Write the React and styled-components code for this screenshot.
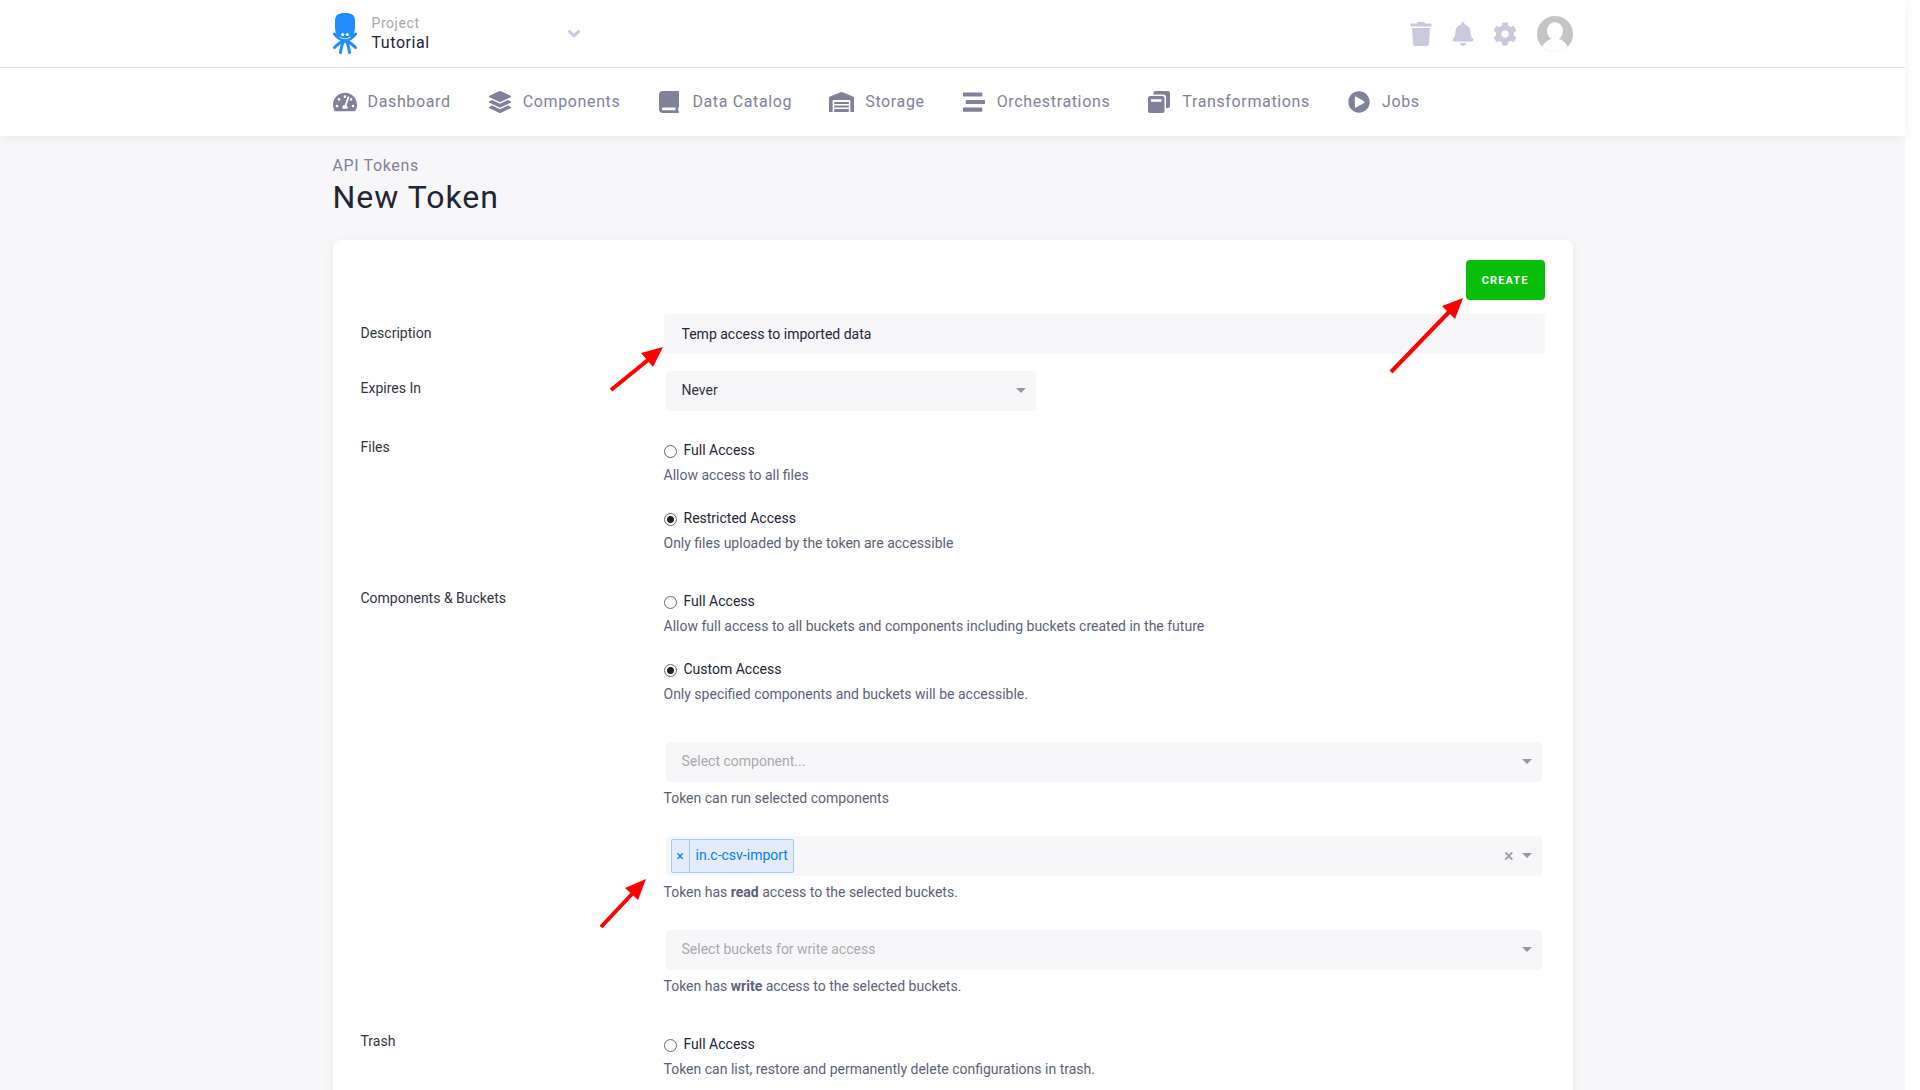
import React from "react";
import styled, { createGlobalStyle, css } from "styled-components";
import {
  FaTachometerAlt,
  FaLayerGroup,
  FaStream,
  FaPlayCircle,
  FaTrash,
  FaBell,
  FaCog,
} from "react-icons/fa";

const color = {
  page: "#f7f7fa",
  text: "#222537",
  label: "#33343f",
  help: "#5c5f7b",
  nav: "#80829b",
  icon: "#c9cadd",
  line: "#e3e4f0",
  muted: "#aaaaaa",
  arrow: "#999999",
  green: "#09be09",
  blue: "#218dff",
  tag: "#007eff",
};

const GlobalStyle = createGlobalStyle`
  *, *::before, *::after { box-sizing: border-box; }
  html { background: #fff; overflow: hidden; }
  body {
    margin: 0;
    font-family: Roboto, "Liberation Sans", sans-serif;
    font-size: 14px;
    line-height: 20px;
    color: ${color.text};
  }
  input, select, button { font: inherit; color: inherit; }
`;

const Shell = styled.div`
  position: relative;
  display: flex;
  flex-direction: column;
  min-height: 100vh;
  margin-right: 15px;
  background: ${color.page};
`;

const Container = styled.div`
  width: 100%;
  max-width: 1240px;
  margin: 0 auto;
`;

const Header = styled.header`
  background: #fff;
  box-shadow: 0 2px 12px rgba(0, 0, 0, 0.06);
`;

const TopBar = styled.div`
  border-bottom: 1px solid ${color.line};
`;

const TopBarInner = styled(Container)`
  display: flex;
  align-items: center;
  justify-content: space-between;
  height: 67px;
`;

const ProjectButton = styled.button`
  display: flex;
  align-items: center;
  width: 247px;
  padding: 0;
  border: 0;
  background: none;
  text-align: left;
`;

const ProjectText = styled.span`
  display: flex;
  flex: 1;
  flex-direction: column;
  margin-left: 15px;
  padding-bottom: 2px;
  letter-spacing: 0.04em;
`;

const ProjectCaption = styled.span`
  font-size: 14px;
  line-height: 19px;
  color: ${color.muted};
`;

const ProjectName = styled.span`
  font-size: 16px;
  line-height: 19px;
`;

const Actions = styled.div`
  display: flex;
  align-items: center;
  gap: 18px;
  color: ${color.icon};
`;

const IconButton = styled.button`
  display: flex;
  padding: 0;
  border: 0;
  background: none;
  color: inherit;
`;

const AvatarButton = styled(IconButton)`
  margin-left: 2px;
`;

const Nav = styled(Container).attrs({ as: "nav" })`
  display: flex;
  align-items: center;
  gap: 37px;
  height: 68px;
`;

const NavLink = styled.a`
  display: flex;
  align-items: center;
  gap: 11px;
  color: ${color.nav};
  font-size: 16px;
  letter-spacing: 0.04em;
  text-decoration: none;
`;

const NavIcon = styled.span`
  display: flex;
  justify-content: center;
  min-width: 24px;
`;

const PageHead = styled(Container)`
  padding: 20px 0 22px;
`;

const Crumb = styled.a`
  display: block;
  font-size: 16px;
  line-height: 20px;
  letter-spacing: 0.04em;
  color: ${color.nav};
  text-decoration: none;
`;

const Title = styled.h1`
  margin: 0;
  font-size: 32px;
  font-weight: 400;
  line-height: 42px;
  letter-spacing: 1px;
`;

const Card = styled(Container).attrs({ as: "form" })`
  flex: 1;
  padding: 20px 28px 0;
  border-radius: 8px 8px 0 0;
  background: #fff;
  box-shadow: 0 2px 12px rgba(0, 0, 0, 0.05);
`;

const CardActions = styled.div`
  display: flex;
  justify-content: flex-end;
  margin-bottom: 14px;
`;

const CreateButton = styled.button.attrs({ type: "button" })`
  height: 40px;
  padding: 1px 16px 0;
  border: 0;
  border-radius: 4px;
  background: ${color.green};
  color: #fff;
  font-size: 11px;
  font-weight: 700;
  letter-spacing: 0.1em;
  text-transform: uppercase;
`;

const Row = styled.div`
  display: grid;
  grid-template-columns: 303px 1fr;
  margin-bottom: ${(p) => p.$gap}px;
`;

const labelText = css`
  padding-top: 9px;
  color: ${color.label};
`;

const RowLabel = styled.label`
  ${labelText}
`;

const RowHeading = styled.span`
  ${labelText}
`;

const TextInput = styled.input`
  width: 100%;
  height: 40px;
  padding: 0 18px;
  border: 0;
  border-radius: 4px;
  background: ${color.page};
`;

const Choices = styled.div`
  padding: 12px 0 ${(p) => p.$after || 0}px;
`;

const Choice = styled.div`
  margin-bottom: 23px;
`;

const ChoiceLabel = styled.label`
  display: flex;
  align-items: center;
  gap: 7px;
  height: 20px;
`;

const Radio = styled.input.attrs({ type: "radio" })`
  appearance: none;
  width: 13px;
  height: 13px;
  margin: 3px 0 0;
  border: 1px solid #666;
  border-radius: 50%;
  background: #fff;

  &:checked {
    background: radial-gradient(circle, #222 0 3px, #fff 4px);
  }
`;

const Help = styled.p`
  margin: ${(p) => p.$top}px 0 0;
  color: ${color.help};

  strong { font-weight: 700; }
`;

const Picker = styled.div`
  display: flex;
  align-items: center;
  width: ${(p) => p.$width || "auto"};
  height: 40px;
  margin: 2px 3px 0 2px;
  padding-right: 10px;
  border-radius: 4px;
  background: ${color.page};
`;

const PickerSelect = styled.select`
  appearance: none;
  flex: 1;
  min-width: 0;
  height: 40px;
  padding: 0 16px 2px;
  border: 0;
  background: none;
  color: ${(p) => (p.$empty ? color.muted : color.label)};
`;

const PickerInput = styled.input`
  flex: 1;
  min-width: 0;
  border: 0;
  background: none;
`;

const PickerList = styled.div`
  display: grid;
  gap: 26px;
`;

const PickerGroup = styled.div`
  display: flow-root;
`;

const Arrow = styled.span`
  border: 5px solid transparent;
  border-top-color: ${color.arrow};
  border-bottom-width: 2px;
`;

const ClearButton = styled.button.attrs({ type: "button" })`
  margin-right: 8px;
  padding: 0;
  border: 0;
  background: none;
  color: ${color.arrow};
  font-size: 18px;
`;

const Tag = styled.span`
  display: flex;
  height: 34px;
  margin-left: 5px;
  border: 1px solid rgba(0, 126, 255, 0.3);
  border-radius: 2px;
  background: rgba(0, 126, 255, 0.08);
  color: ${color.tag};
  line-height: 30px;
`;

const TagRemove = styled.button.attrs({ type: "button" })`
  width: 18px;
  padding: 0;
  border: 0;
  border-right: 1px solid rgba(0, 126, 255, 0.3);
  background: none;
`;

const TagText = styled.span`
  padding: 0 5px 0 6px;
`;

const Pointers = styled.svg`
  position: absolute;
  top: 0;
  left: 50%;
  margin-left: -620px;
  pointer-events: none;
`;

const Logo = () => (
  <svg width="24" height="41" viewBox="0 0 24 41" aria-hidden="true">
    <path
      d="M2 8C2 2 5 0 12 0s10 2 10 8v6c0 5-2 10-5 12H7C4 24 2 19 2 14z"
      fill={color.blue}
    />
    <g fill="none" stroke={color.blue} strokeWidth="3" strokeLinecap="round">
      <path d="M1.500 21C4 24 7 27.500 12 27.500s8-3.500 10.500-6.500" />
      <path d="M1.500 34.500C5 31 7 29 11 28M22.500 34.500C19 31 17 29 13 28" />
      <path d="M7.500 39.500C8 35 9 31 11 28M16.500 39.500C16 35 15 31 13 28" />
    </g>
    <path d="M6.500 24q5.500 3.500 11 0" fill="none" stroke="#fff" strokeWidth="0.800" />
    <circle cx="9.700" cy="21.500" r="1.600" fill="#fff" />
    <circle cx="14.300" cy="21.500" r="1.600" fill="#fff" />
  </svg>
);

const Chevron = () => (
  <svg width="12" height="8" viewBox="0 0 12 8" aria-hidden="true">
    <path d="M1.500 1.500L6 5.800l4.500-4.300" fill="none" stroke={color.icon} strokeWidth="3" strokeLinecap="round" strokeLinejoin="round" />
  </svg>
);

const BookIcon = () => (
  <svg width="20" height="22" viewBox="0 0 20 22" fill="currentColor" aria-hidden="true">
    <path
      fillRule="evenodd"
      d="M4 0h15q1 0 1 1v14.500q0 .800-.600 1.200-.500 1.600 0 3.200.600.400.600 1v.100q0 1-1 1H4q-4 0-4-4V4q0-4 4-4zM4.200 16.500q-1.300.200-1.300 1.400t1.300 1.400H16.500v-2.800z"
    />
  </svg>
);

const WarehouseIcon = () => (
  <svg width="25" height="20" viewBox="0 0 24 20" preserveAspectRatio="none" fill="currentColor" aria-hidden="true">
    <path d="M0 20V6q0-1 1-1.400L11 .300q1-.500 2 0l10 4.300q1 .400 1 1.400v14h-3.500V9q0-1-1-1h-15q-1 0-1 1v11z" />
    <path d="M5 10h14v2H5zM5 13.500h14v2H5zM5 17h14v3H5z" />
  </svg>
);

const CopiesIcon = () => (
  <svg width="22" height="22" viewBox="0 0 22 22" fill="currentColor" aria-hidden="true">
    <path d="M5.500 3.500V2q0-2 2-2H20q2 0 2 2v13q0 2-2 2h-2V6q0-2.500-2.500-2.500z" />
    <path fillRule="evenodd" d="M2 5h12.500q2 0 2 2V20q0 2-2 2H2q-2 0-2-2V7q0-2 2-2zM3 8.200v2.600h10.500V8.200z" />
  </svg>
);

const Avatar = () => (
  <svg width="36" height="36" viewBox="0 0 36 36" aria-hidden="true">
    <defs>
      <clipPath id="avatar"><circle cx="18" cy="18" r="18" /></clipPath>
    </defs>
    <g clipPath="url(#avatar)">
      <rect width="36" height="36" fill="#c5c5c5" />
      <ellipse cx="18" cy="15" rx="8" ry="9" fill="#fff" />
      <path d="M4 36c1-7 4-11 10-13h8c6 2 9 6 10 13z" fill="#fff" />
    </g>
  </svg>
);

const navItems = [
  { name: "Dashboard", icon: <FaTachometerAlt size={24} /> },
  { name: "Components", icon: <FaLayerGroup size={22} /> },
  { name: "Data Catalog", icon: <BookIcon /> },
  { name: "Storage", icon: <WarehouseIcon /> },
  { name: "Orchestrations", icon: <FaStream size={22} /> },
  { name: "Transformations", icon: <CopiesIcon /> },
  { name: "Jobs", icon: <FaPlayCircle size={22} /> },
];

function AccessChoice({ name, label, help, checked }) {
  return (
    <Choice>
      <ChoiceLabel>
        <Radio name={name} defaultChecked={checked} />
        {label}
      </ChoiceLabel>
      <Help $top={5}>{help}</Help>
    </Choice>
  );
}

export default function App() {
  return (
    <>
      <GlobalStyle />
      <Shell>
        <Header>
          <TopBar>
            <TopBarInner>
              <ProjectButton type="button">
                <Logo />
                <ProjectText>
                  <ProjectCaption>Project</ProjectCaption>
                  <ProjectName>Tutorial</ProjectName>
                </ProjectText>
                <Chevron />
              </ProjectButton>
              <Actions>
                <IconButton type="button" aria-label="Trash"><FaTrash size={24} /></IconButton>
                <IconButton type="button" aria-label="Notifications"><FaBell size={24} /></IconButton>
                <IconButton type="button" aria-label="Settings"><FaCog size={24} /></IconButton>
                <AvatarButton type="button" aria-label="Account"><Avatar /></AvatarButton>
              </Actions>
            </TopBarInner>
          </TopBar>
          <Nav>
            {navItems.map((item) => (
              <NavLink key={item.name} href="#">
                <NavIcon>{item.icon}</NavIcon>
                {item.name}
              </NavLink>
            ))}
          </Nav>
        </Header>

        <PageHead>
          <Crumb href="#">API Tokens</Crumb>
          <Title>New Token</Title>
        </PageHead>

        <Card>
          <CardActions>
            <CreateButton>Create</CreateButton>
          </CardActions>

          <Row $gap={15}>
            <RowLabel htmlFor="description">Description</RowLabel>
            <TextInput id="description" defaultValue="Temp access to imported data" />
          </Row>

          <Row $gap={17}>
            <RowLabel htmlFor="expires">Expires In</RowLabel>
            <Picker $width="370px">
              <PickerSelect id="expires"><option>Never</option></PickerSelect>
              <Arrow />
            </Picker>
          </Row>

          <Row $gap={3}>
            <RowHeading>Files</RowHeading>
            <Choices role="radiogroup" aria-label="Files">
              <AccessChoice name="files" label="Full Access" help="Allow access to all files" />
              <AccessChoice name="files" label="Restricted Access" help="Only files uploaded by the token are accessible" checked />
            </Choices>
          </Row>

          <Row $gap={26}>
            <RowHeading>Components &amp; Buckets</RowHeading>
            <div>
              <Choices $after={13} role="radiogroup" aria-label="Components and buckets">
                <AccessChoice name="buckets" label="Full Access" help="Allow full access to all buckets and components including buckets created in the future" />
                <AccessChoice name="buckets" label="Custom Access" help="Only specified components and buckets will be accessible." checked />
              </Choices>
              <PickerList>
                <PickerGroup>
                  <Picker>
                    <PickerSelect $empty aria-label="Components"><option>Select component...</option></PickerSelect>
                    <Arrow />
                  </Picker>
                  <Help $top={6}>Token can run selected components</Help>
                </PickerGroup>
                <PickerGroup>
                  <Picker>
                    <Tag>
                      <TagRemove aria-label="Remove in.c-csv-import">×</TagRemove>
                      <TagText>in.c-csv-import</TagText>
                    </Tag>
                    <PickerInput aria-label="Buckets for read access" />
                    <ClearButton aria-label="Clear all">×</ClearButton>
                    <Arrow />
                  </Picker>
                  <Help $top={6}>Token has <strong>read</strong> access to the selected buckets.</Help>
                </PickerGroup>
                <PickerGroup>
                  <Picker>
                    <PickerSelect $empty aria-label="Buckets for write access"><option>Select buckets for write access</option></PickerSelect>
                    <Arrow />
                  </Picker>
                  <Help $top={6}>Token has <strong>write</strong> access to the selected buckets.</Help>
                </PickerGroup>
              </PickerList>
            </div>
          </Row>

          <Row $gap={0}>
            <RowHeading>Trash</RowHeading>
            <Choices role="radiogroup" aria-label="Trash">
              <AccessChoice name="trash" label="Full Access" help="Token can list, restore and permanently delete configurations in trash." />
            </Choices>
          </Row>
        </Card>

        <Pointers width="1240" height="1090" viewBox="0 0 1240 1090" aria-hidden="true">
          <g stroke="#f00" strokeWidth="4" fill="#f00">
            <path d="M278 390L315 360M1058 372L1116 312M268 927L299 894" />
            <g stroke="none">
              <path d="M330 347L308 353L320 367z" />
              <path d="M1130 298L1109 306L1122 319z" />
              <path d="M313 879L292 888L305 900z" />
            </g>
          </g>
        </Pointers>
      </Shell>
    </>
  );
}
